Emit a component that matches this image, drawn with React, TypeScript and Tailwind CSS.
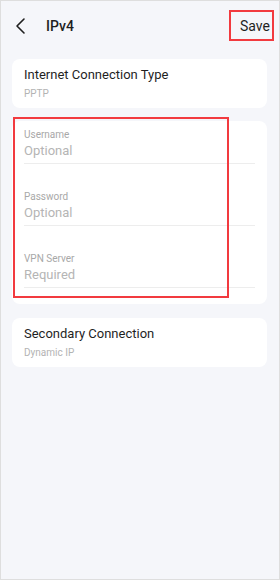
import type { ReactNode } from 'react'

const font = { fontFamily: 'Roboto, "Noto Sans", sans-serif' }

function InfoCard({ title, value }: { title: string; value: string }) {
  return (
    <div className="ml-[11px] flex w-[255px] flex-col gap-[3px] rounded-lg bg-white px-3 py-[7px]">
      <p className="text-[13px] leading-[18px] text-[#1f1f1f]">{title}</p>
      <p className="text-[10px] leading-[14px] text-[#b3b3b3]">{value}</p>
    </div>
  )
}

function Field({ label, placeholder }: { label: string; placeholder: string }) {
  return (
    <div className="flex flex-col border-b border-[#ededed] pb-[3px]">
      <p className="text-[10px] leading-[14px] text-[#a8a8a8]">{label}</p>
      <p className="text-[13px] leading-[18px] text-[#b5b5b5]">{placeholder}</p>
    </div>
  )
}

function Highlight({ className, children }: { className: string; children?: ReactNode }) {
  return <div className={`pointer-events-none absolute border-2 border-[#f23a3f] ${className}`}>{children}</div>
}

export default function App() {
  return (
    <div style={font} className="relative h-[580px] w-[280px] overflow-hidden border border-[#dedede] bg-[#f5f6fa]">
      {/* Header */}
      <div className="flex h-[50px] items-center pl-[13px] pr-[9px]">
        <svg width="12" height="18" viewBox="0 0 12 18" fill="none" className="mr-[20px]">
          <path d="M10 2 L3 9 L10 16" stroke="#1f1f1f" strokeWidth="1.6" strokeLinecap="round" strokeLinejoin="round" />
        </svg>
        <h1 className="flex-1 text-[14px] font-medium text-[#1f1f1f]">IPv4</h1>
        <button type="button" className="text-[14px] text-[#1f1f1f]">Save</button>
      </div>

      <div className="mt-[8px] flex flex-col">
        <InfoCard title="Internet Connection Type" value="PPTP" />

        <div className="ml-[11px] mt-[13px] flex w-[255px] flex-col gap-[26px] rounded-lg bg-white px-3 pb-[16px] pt-[7px]">
          <Field label="Username" placeholder="Optional" />
          <Field label="Password" placeholder="Optional" />
          <Field label="VPN Server" placeholder="Required" />
        </div>

        <div className="mt-[14px]">
          <InfoCard title="Secondary Connection" value="Dynamic IP" />
        </div>
      </div>

      {/* annotation boxes */}
      <Highlight className="left-[228px] top-[9px] h-[31px] w-[45px]" />
      <Highlight className="left-[12px] top-[116px] h-[181px] w-[216px]" />
    </div>
  )
}
